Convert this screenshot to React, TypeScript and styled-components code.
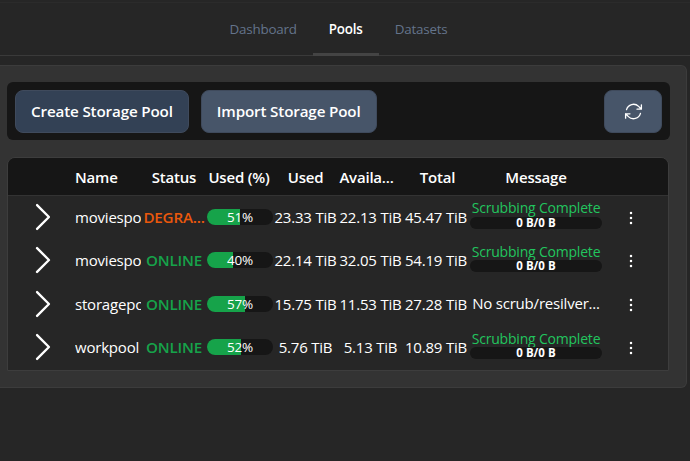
import { createGlobalStyle, styled } from "styled-components";
import { HiOutlineArrowPath, HiOutlineChevronRight, HiEllipsisVertical } from "react-icons/hi2";

const GlobalStyle = createGlobalStyle`
  html, body {
    margin: 0;
    height: 100%;
    overflow: hidden;
    background: #262626;
    color: #fff;
    font-family: "Open Sans", "Noto Sans", sans-serif;
  }
`;

const Page = styled.div`
  height: 461px;
  display: flex;
  flex-direction: column;
  background: #262626;
`;

const Nav = styled.nav`
  height: 52px;
  margin-top: 2px;
  border-top: 1px solid #2b2b2b;
  border-bottom: 1px solid #3a3a3a;
  display: flex;
  justify-content: center;
  padding-right: 13px;
`;

const Tab = styled.a<{ $active?: boolean }>`
  padding: 2px 16px 0;
  display: flex;
  align-items: center;
  font-size: 13.4px;
  letter-spacing: -0.2px;
  font-weight: ${(p) => (p.$active ? 600 : 500)};
  color: ${(p) => (p.$active ? "#fff" : "#64748b")};
  border-bottom: 3px solid ${(p) => (p.$active ? "#444" : "transparent")};
  margin-bottom: -1px;
`;

const Card = styled.section`
  margin: 9px 3px 0 0;
  height: 323px;
  box-sizing: border-box;
  background: #333333;
  border: 1px solid #3c3c3c;
  border-left: none;
  border-radius: 0 6px 6px 0;
  padding: 16px 16px 0 7px;
`;

const Toolbar = styled.div`
  height: 58px;
  box-sizing: border-box;
  background: #161616;
  border-radius: 6px;
  display: flex;
  align-items: center;
  padding: 0 8px;
  gap: 12px;
`;

const Button = styled.button<{ $tone: string }>`
  height: 43px;
  padding: 0 15px;
  border: 1px solid #3f4a5c;
  border-radius: 8px;
  background: ${(p) => p.$tone};
  color: #fff;
  font-family: inherit;
  font-size: 15.2px;
  letter-spacing: -0.15px;
  font-weight: 600;
  display: flex;
  align-items: center;
  justify-content: center;
`;

const RefreshButton = styled(Button)`
  width: 58px;
  margin-left: auto;
  font-size: 21px;
`;

const Table = styled.div`
  margin: 17px 1px 0 0;
  background: #262626;
  border: 1px solid #3d3d3d;
  border-radius: 8px 8px 0 0;
  overflow: hidden;
`;

const grid = `
  display: grid;
  grid-template-columns: 67px 66px 66px 66px 65px 65px 66px 134px 1fr;
  align-items: center;
`;

const HeadRow = styled.div`
  ${grid}
  height: 37px;
  background: #161616;
  border-bottom: 1px solid #333;
  font-size: 15px;
  font-weight: 600;
  letter-spacing: -0.2px;
`;

const HeadCell = styled.div<{ $left?: boolean; $nudge?: number }>`
  text-align: ${(p) => (p.$left ? "left" : "center")};
  white-space: nowrap;
  padding-left: ${(p) => (p.$nudge && p.$nudge > 0 ? p.$nudge : 0)}px;
  padding-right: ${(p) => (p.$nudge && p.$nudge < 0 ? -p.$nudge : 0)}px;
`;

const Row = styled.div`
  ${grid}
  box-sizing: border-box;
  height: 43.5px;
  padding-bottom: 2px;
  font-size: 15px;
  letter-spacing: -0.2px;
`;

const Expander = styled.div`
  display: flex;
  justify-content: center;
  padding-left: 2px;
  font-size: 38px;
`;

const Name = styled.div`
  overflow: hidden;
  white-space: nowrap;
`;

const Status = styled.div<{ $bad?: boolean }>`
  color: ${(p) => (p.$bad ? "#ea580c" : "#16a34a")};
  font-weight: 600;
  text-align: center;
  white-space: nowrap;
  font-size: 15.2px;
`;

const Usage = styled.div`
  position: relative;
  width: 66px;
  height: 16px;
  background: #161616;
  border-radius: 8px;
  overflow: hidden;
`;

const UsageFill = styled.div`
  height: 100%;
  background: #16a34a;
`;

const UsageLabel = styled.span`
  position: absolute;
  inset: 0;
  display: flex;
  align-items: center;
  justify-content: center;
  font-size: 13.5px;
  font-weight: 500;
`;

const Amount = styled.div`
  text-align: center;
  white-space: nowrap;
`;

const MessageCell = styled.div<{ $stacked?: boolean }>`
  display: flex;
  flex-direction: column;
  align-items: center;
  padding-bottom: ${(p) => (p.$stacked ? "5px" : "0")};
`;

const MessageText = styled.div<{ $ok?: boolean }>`
  color: ${(p) => (p.$ok ? "#22c55e" : "#fff")};
  font-size: ${(p) => (p.$ok ? "14px" : "15px")};
  font-weight: ${(p) => (p.$ok ? 500 : 400)};
  line-height: 15px;
  white-space: nowrap;
`;

const Scrub = styled.div`
  width: 132px;
  height: 12px;
  margin-top: 1.5px;
  border-radius: 6px;
  background: #161616;
  font-size: 11.5px;
  line-height: 12px;
  font-weight: 700;
  letter-spacing: 0;
  text-align: center;
`;

const Menu = styled.div`
  display: flex;
  justify-content: center;
  padding-right: 10px;
  padding-top: 2px;
  font-size: 20px;
`;

type Pool = {
  name: string;
  status: string;
  percent: number;
  fill: number;
  used: string;
  available: string;
  total: string;
  scrubbed: boolean;
};

const pools: Pool[] = [
  { name: "moviespool", status: "DEGRA...", percent: 51, fill: 50, used: "23.33 TiB", available: "22.13 TiB", total: "45.47 TiB", scrubbed: true },
  { name: "moviespool2", status: "ONLINE", percent: 40, fill: 39, used: "22.14 TiB", available: "32.05 TiB", total: "54.19 TiB", scrubbed: true },
  { name: "storagepool", status: "ONLINE", percent: 57, fill: 57, used: "15.75 TiB", available: "11.53 TiB", total: "27.28 TiB", scrubbed: false },
  { name: "workpool", status: "ONLINE", percent: 52, fill: 52, used: "5.76 TiB", available: "5.13 TiB", total: "10.89 TiB", scrubbed: true },
];

export default function App() {
  return (
    <Page>
      <GlobalStyle />
      <Nav>
        <Tab>Dashboard</Tab>
        <Tab $active>Pools</Tab>
        <Tab>Datasets</Tab>
      </Nav>
      <Card>
        <Toolbar>
          <Button $tone="#334155">Create Storage Pool</Button>
          <Button $tone="#475569">Import Storage Pool</Button>
          <RefreshButton $tone="#475569" aria-label="Refresh">
            <HiOutlineArrowPath />
          </RefreshButton>
        </Toolbar>
        <Table>
          <HeadRow>
            <div />
            <HeadCell $left>Name</HeadCell>
            <HeadCell>Status</HeadCell>
            <HeadCell $nudge={-2}>Used (%)</HeadCell>
            <HeadCell>Used</HeadCell>
            <HeadCell $nudge={-8}>Availa...</HeadCell>
            <HeadCell $nudge={3}>Total</HeadCell>
            <HeadCell>Message</HeadCell>
            <div />
          </HeadRow>
          {pools.map((pool) => (
            <Row key={pool.name}>
              <Expander>
                <HiOutlineChevronRight />
              </Expander>
              <Name>{pool.name}</Name>
              <Status $bad={pool.status !== "ONLINE"}>{pool.status}</Status>
              <Usage>
                <UsageFill style={{ width: `${pool.fill}%` }} />
                <UsageLabel>{pool.percent}%</UsageLabel>
              </Usage>
              <Amount>{pool.used}</Amount>
              <Amount>{pool.available}</Amount>
              <Amount>{pool.total}</Amount>
              {pool.scrubbed ? (
                <MessageCell $stacked>
                  <MessageText $ok>Scrubbing Complete</MessageText>
                  <Scrub>0 B/0 B</Scrub>
                </MessageCell>
              ) : (
                <MessageCell>
                  <MessageText>No scrub/resilver...</MessageText>
                </MessageCell>
              )}
              <Menu>
                <HiEllipsisVertical />
              </Menu>
            </Row>
          ))}
        </Table>
      </Card>
    </Page>
  );
}
